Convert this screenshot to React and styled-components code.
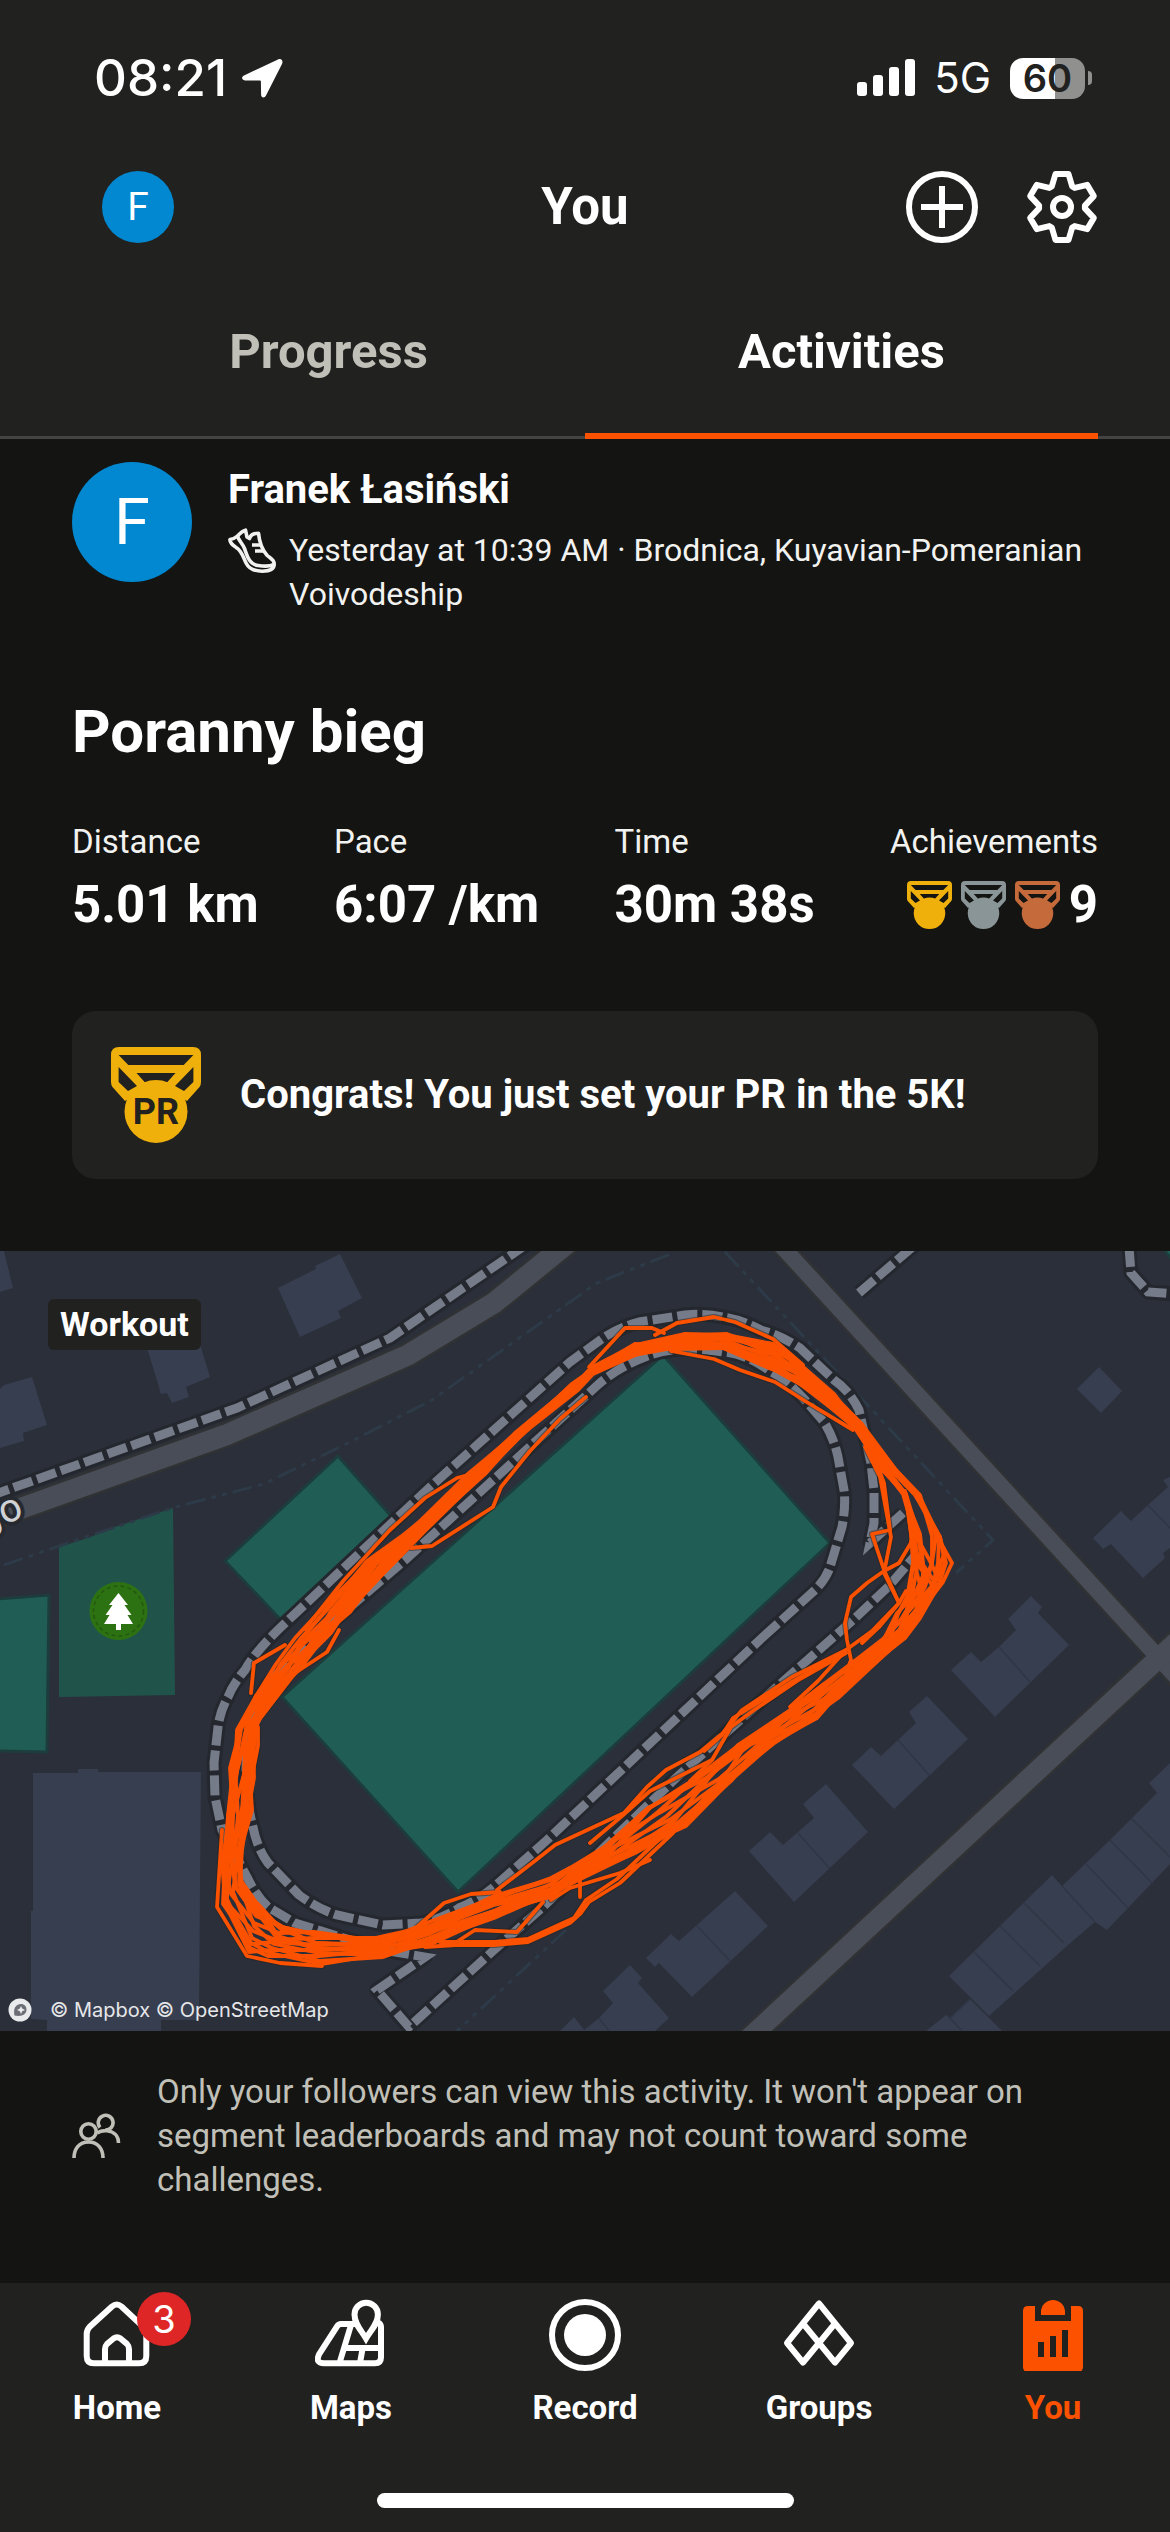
import React from 'react';
import styled, { createGlobalStyle } from 'styled-components';

const color = {
  surface: '#21211f',
  page: '#141412',
  line: '#434341',
  text: '#ffffff',
  soft: '#f2f2f0',
  muted: '#c1c0b8',
  accent: '#fc5200',
  avatar: '#0288d1',
  badge: '#de2626',
};

const GlobalStyle = createGlobalStyle`
  *, *::before, *::after { box-sizing: border-box; }
  body { margin: 0; background: ${color.page}; color: ${color.text}; font-family: Roboto, "Liberation Sans", sans-serif; }
  h1, h2, p, dl, dt, dd { margin: 0; font-weight: inherit; }
  svg { display: block; flex: none; }
  button { padding: 0; border: 0; background: none; color: inherit; font: inherit; cursor: pointer; }
  a { color: inherit; text-decoration: none; }
`;

const Screen = styled.div`
  display: flex;
  flex-direction: column;
  min-height: 100vh;
`;

const Top = styled.header`
  background: ${color.surface};
`;

const StatusBar = styled.div`
  display: flex;
  align-items: center;
  justify-content: space-between;
  height: 156px;
  padding: 0 78px 0 94px;
  font-family: Inter, "Liberation Sans", sans-serif;
`;

const StatusGroup = styled.div`
  display: flex;
  align-items: center;
  gap: ${(p) => p.$gap}px;
`;

const Clock = styled.span`
  font-size: 51px;
  font-weight: 500;
  line-height: 60px;
`;

const Network = styled.span`
  font-size: 42px;
  line-height: 50px;
`;

const Battery = styled.div`
  display: flex;
  align-items: center;
  gap: 3px;
`;

const BatteryBody = styled.span`
  width: 75px;
  border-radius: 13px;
  background: linear-gradient(90deg, #fff 60%, #90908f 60%);
  color: ${color.surface};
  font-size: 38px;
  font-weight: 600;
  line-height: 41px;
  text-align: center;
`;

const BatteryTip = styled.span`
  width: 4px;
  height: 14px;
  border-radius: 0 4px 4px 0;
  background: #90908f;
`;

const TitleBar = styled.div`
  display: grid;
  grid-template-columns: 1fr auto 1fr;
  align-items: center;
  height: 102px;
  padding: 0 72px 0 102px;
`;

const Title = styled.h1`
  margin-right: 30px;
  font-size: 51px;
  font-weight: 700;
  line-height: 60px;
`;

const Actions = styled.div`
  display: flex;
  justify-content: flex-end;
  gap: 48px;
`;

const Avatar = styled.span`
  display: flex;
  flex: none;
  align-items: center;
  justify-content: center;
  width: ${(p) => p.$size}px;
  height: ${(p) => p.$size}px;
  border-radius: 50%;
  background: ${color.avatar};
  color: #fff;
  font-size: ${(p) => p.$font}px;
  line-height: 1;
`;

const Tabs = styled.div`
  display: flex;
  height: 181px;
  padding: 0 72px;
  border-bottom: 3px solid ${color.line};
`;

const Tab = styled.button`
  flex: 1;
  margin-bottom: -3px;
  padding-top: 12px;
  border-bottom: 6px solid ${(p) => (p.$active ? color.accent : 'transparent')};
  color: ${(p) => (p.$active ? color.text : color.muted)};
  font-size: 49px;
  font-weight: 700;
`;

const Feed = styled.main`
  flex: 1;
`;

const Summary = styled.div`
  padding: 23px 72px 72px;
`;

const Athlete = styled.div`
  display: flex;
  gap: 36px;
`;

const AthleteText = styled.div`
  display: flex;
  flex-direction: column;
  gap: 14px;
  min-width: 0;
  padding-top: 4px;
`;

const Name = styled.a`
  font-size: 40px;
  font-weight: 700;
  line-height: 48px;
`;

const Meta = styled.div`
  display: flex;
  gap: 13px;
  color: ${color.soft};
  font-size: 32px;
  line-height: 44px;
`;

const ActivityTitle = styled.h2`
  margin-top: 80px;
  font-size: 60px;
  font-weight: 700;
  line-height: 72px;
`;

const Stats = styled.dl`
  display: flex;
  justify-content: space-between;
  margin-top: 52px;
`;

const Stat = styled.div`
  text-align: ${(p) => (p.$end ? 'right' : 'left')};
`;

const StatLabel = styled.dt`
  color: ${color.soft};
  font-size: 33px;
  line-height: 44px;
`;

const StatValue = styled.dd`
  display: flex;
  align-items: center;
  justify-content: ${(p) => (p.$end ? 'flex-end' : 'flex-start')};
  gap: 9px;
  margin-top: 11px;
  font-size: 51px;
  font-weight: 700;
  line-height: 60px;
`;

const Congrats = styled.div`
  display: flex;
  align-items: center;
  gap: 39px;
  margin-top: 76px;
  padding: 36px 39px;
  border-radius: 24px;
  background: ${color.surface};
  font-size: 40px;
  font-weight: 700;
  line-height: 48px;
`;

const MapFrame = styled.div`
  position: relative;
  overflow: hidden;
  background: #2b2f3a;
`;

const MapDrawing = styled.svg`
  width: 100%;
  height: auto;
`;

const Chip = styled.span`
  position: absolute;
  top: 48px;
  left: 48px;
  padding: 0 12px;
  border-radius: 6px;
  background: ${color.surface};
  font-size: 34px;
  font-weight: 700;
  line-height: 51px;
`;

const Attribution = styled.div`
  position: absolute;
  bottom: 8px;
  left: 8px;
  display: flex;
  align-items: center;
  gap: 18px;
  color: #e6e7e9;
  font-family: Inter, "Liberation Sans", sans-serif;
  font-size: 20px;
  line-height: 26px;
`;

const Privacy = styled.div`
  display: flex;
  align-items: center;
  gap: 36px;
  padding: 39px 72px;
  color: ${color.muted};
  font-size: 33px;
  line-height: 44px;
`;

const Bottom = styled.footer`
  padding-bottom: 24px;
  background: ${color.surface};
`;

const Nav = styled.nav`
  display: flex;
  padding: 16px 0 65px;
`;

const NavItem = styled.a`
  display: flex;
  flex: 1;
  flex-direction: column;
  align-items: center;
  gap: 17px;
  color: ${(p) => (p.$active ? color.accent : color.text)};
  font-size: 33px;
  font-weight: 700;
  line-height: 40px;
`;

const NavIcon = styled.span`
  position: relative;
`;

const Badge = styled.span`
  position: absolute;
  top: -7px;
  right: -38px;
  width: 54px;
  border-radius: 27px;
  background: ${color.badge};
  color: #fff;
  font-family: Inter, "Liberation Sans", sans-serif;
  font-size: 38px;
  font-weight: 400;
  line-height: 54px;
  text-align: center;
`;

const HomeIndicator = styled.div`
  width: 417px;
  height: 15px;
  margin: 0 auto;
  border-radius: 8px;
  background: #fff;
`;

const LocationIcon = () => (
  <svg width="42" height="40" viewBox="0 0 42 40" fill="#fff" aria-hidden="true">
    <path d="M37 1.500 3 17.500C0 19 .7 22.300 4 22.400l15 .2c.6 0 .9.3.9.9l.2 13c0 3.400 3.400 4 4.900 1L41 6c1.500-3.200-.8-6-4-4.500z" />
  </svg>
);

const SignalIcon = () => (
  <svg width="58" height="38" viewBox="0 0 58 38" fill="#fff" aria-hidden="true">
    <rect x="0" y="23" width="10" height="14" rx="3" />
    <rect x="16" y="16" width="10" height="21" rx="3" />
    <rect x="32" y="8" width="10" height="29" rx="3" />
    <rect x="48" y="0" width="10" height="37" rx="3" />
  </svg>
);

const PlusIcon = () => (
  <svg width="72" height="72" viewBox="0 0 72 72" fill="none" stroke="currentColor" strokeWidth="6" aria-hidden="true">
    <circle cx="36" cy="36" r="33" />
    <path d="M36 15v42M15 36h42" />
  </svg>
);

const gearPoints = [0, 60, 120, 180, 240, 300]
  .flatMap((deg) => {
    const a = (deg * Math.PI) / 180;
    return [[-10.2, -20.5], [-6.5, -33], [6.5, -33], [10.2, -20.5]].map(([x, y]) =>
      [36 + x * Math.cos(a) - y * Math.sin(a), 36 + x * Math.sin(a) + y * Math.cos(a)].map((n) => n.toFixed(1)).join(',')
    );
  })
  .join(' ');

const GearIcon = () => (
  <svg width="72" height="72" viewBox="0 0 72 72" fill="none" stroke="currentColor" strokeWidth="6" strokeLinejoin="round" aria-hidden="true">
    <polygon points={gearPoints} />
    <circle cx="36" cy="36" r="9" />
  </svg>
);

const ShoeIcon = () => (
  <svg width="48" height="46" viewBox="0 0 48 46" fill="none" stroke="currentColor" strokeWidth="3.600" strokeLinejoin="round" aria-hidden="true">
    <path d="M2 11.500Q6 11 9.500 8 14 3 17.500 2.200L19 9l2.500 1.500Q23 5.200 30.500 5.200c1 10 4 17 8.500 22 3 3 7.200 4 7.200 8.800 0 5-5 7.200-12 7.200-8 0-13-2-16-8-3-6-4-11-9-15C5 17 1.600 15 2 11.500z" />
    <path d="M9.500 8.500c2 5 5 7 7 12 2.500 6.500 4 15.500 13.500 17 5 .8 12 1 15.500-1M24 17h8M27 23h8" />
  </svg>
);

const PeopleIcon = () => (
  <svg width="49" height="46" viewBox="0 0 49 46" fill="none" stroke="currentColor" strokeWidth="3.600" aria-hidden="true">
    <circle cx="16.500" cy="18.500" r="7.700" />
    <path d="M2 45c0-9 5-16 14.500-16S31 36 31 45" />
    <path d="M28 14.500a7.400 7.400 0 1 1 5 2.600M25 20c3-2 6-2.700 10-2.300C42 18.500 46.500 23 46.500 30" />
  </svg>
);

const Medal = ({ size, fill, label }) => (
  <svg width={(size * 15) / 16} height={size} viewBox="0 0 90 96" fill={fill} role="img" aria-label={label || 'Medal'}>
    <path fillRule="evenodd" d="M8 0H82Q90 0 90 8V35Q90 38 88.500 40L76 54 62 46H28L14 54 1.500 40Q0 38 0 35V8Q0 0 8 0zM7.600 8 17.300 18H72.700L82.400 8zM25.500 26 34.500 36H55.500L64.500 26zM7.600 20V35L17 44 26 39zM82.400 20V35L73 44 64 39z" />
    <circle cx="45" cy="64.500" r="31.500" />
    {label && (
      <text x="45" y="77" textAnchor="middle" fill={color.surface} fontFamily="Roboto, sans-serif" fontWeight="700" fontSize="36">
        {label}
      </text>
    )}
  </svg>
);

const HomeIcon = () => (
  <svg width="72" height="72" viewBox="0 0 72 72" fill="none" stroke="currentColor" strokeWidth="6" aria-hidden="true">
    <path d="M31 7.500 8.500 28Q5.700 31 5.700 35V57q0 7.300 7.300 7.300H58q7.300 0 7.300-7.300V35q0-4-2.800-7L40.500 7.500q-4.800-4-9.500 0z" />
    <path d="M24 63V50q0-3 2-5l6.500-5.500q3.500-2.500 7 0L46 45q2 2 2 5v13" />
  </svg>
);

const MapsIcon = () => (
  <svg width="72" height="72" viewBox="0 0 72 72" fill="none" stroke="currentColor" strokeWidth="6" aria-hidden="true">
    <path d="M40 25H26q-2.500 0-3.800 2.200L4 55.500q-4 8.700 5 8.700H60q6 0 6-6V28q0-3-3-4.500M36 26 24.500 64M29 49H66M47.500 50 45 64" />
    <path d="M51 39.500C46 31 39.500 25 39.500 15.500a11.700 11.700 0 0 1 23.400 0C62.900 25 56 31 51 39.500z" />
  </svg>
);

const RecordIcon = () => (
  <svg width="72" height="72" viewBox="0 0 72 72" aria-hidden="true">
    <circle cx="36" cy="36" r="33" fill="none" stroke="currentColor" strokeWidth="6" />
    <circle cx="36" cy="36" r="21" fill="currentColor" />
  </svg>
);

const GroupsIcon = () => (
  <svg width="72" height="72" viewBox="0 0 72 72" fill="none" stroke="currentColor" strokeWidth="6" strokeLinejoin="round" aria-hidden="true">
    <path d="M36 4.500 4 44 20 63.500 52 24.500zM36 4.500 68 44 52 63.500 20 24.500" />
  </svg>
);

const YouIcon = () => (
  <svg width="72" height="72" viewBox="0 0 72 72" fill="currentColor" aria-hidden="true">
    <path fillRule="evenodd" d="M18 7h-7q-5 0-5 5v56q0 5 5 5h50q5 0 5-5V12q0-5-5-5h-7v15H18zM21 43h6v15h-6zM33 37h6v21h-6zM45 31h6v27h-6z" />
    <path d="M24 16v-3a12 12 0 0 1 24 0v3z" />
  </svg>
);

const buildings = [
  '0,0 4,0 13,37 0,41',
  '278,37 316,18 315,15 340,3 362,47 338,60 341,67 300,86',
  '145,90 199,90 210,126 186,136 189,146 172,152 167,142 161,143',
  '0,138 4,134 32,126 47,174 23,182 24,190 0,197',
  '33,522 78,522 78,518 98,518 98,521 201,521 200,636 199,769 161,769 161,780 47,780 47,769 31,768 31,660 33,660',
  '1099,116 1122,140 1101,162 1077,138',
  '1170,226 1163,229 1168,236 1148,254 1131,270 1121,260 1093,287 1103,298 1111,293 1143,327 1165,307 1163,302 1170,297',
  '1031,345 1042,356 1038,362 1069,394 995,466 951,419 971,401 981,411 999,396 1016,379 1008,368',
  '927,445 968,488 894,558 852,514 871,496 881,505 916,472 909,461',
  '826,533 868,581 794,651 749,600 770,581 783,594 814,567 803,553',
  '735,640 768,675 692,746 659,712 655,716 646,707 671,683 679,690',
  '630,714 642,727 638,732 669,767 655,780 583,780 599,767 613,752 603,740',
  '574,766 585,780 560,780',
  '1170,512 1149,532 1157,542 1110,589 1062,635 1052,624 949,725 989,765 1067,695 1095,671 1107,679 1170,613',
  '970,748 1002,780 926,780 946,764 950,767',
];

const dividers =
  'M1148 254l22 23M999 396l31 35M898 489l32 36M798 582l32 36M697 675l33 35M599 767l10 13M974 701l39 39M1000 675l40 40M1024 652l40 40M1085 612l43 45M1110 589l43 44M1131 567l39 39M1062 635l33 36M970 748l-20 19 12 13';

const footpaths = [
  'M-10 245 237 157 390 87 530-9',
  'M859 42 916-7',
  'M1129-4 1131 22 1148 41 1175 43',
  'M903 262 870 292 874 272V240L871 212 859 159Q850 140 834 129L800 97Q780 84 761 79 740 68 723 66 705 62 685 64L639 71Q620 76 603 87L570 111 429 237 281 376Q254 402 245 419 233 433 228 446 220 460 218 476L214 512 215 546 222 579 247 626Q256 645 268 656L295 672 383 699 425 706 377 739 409 776 494 699 543 656 620 581 677 526 779 434 853 369 888 336 914 306',
  'M763 386 815 339Q826 328 830 316L842 276Q846 255 844 239L838 206Q834 187 824 171L805 149Q788 130 770 120 745 102 723 101 680 94 650 104 620 115 600 132L405 309 323 379 275 425Q246 455 246 520 246 550 253 576 257 597 268 612L299 644Q318 658 337 664L383 674 421 672Q442 668 459 657 480 648 494 636L547 589z',
];

const boundaries = [
  'M4 314 59 295 172 257 264 233 350 191 432 149 597 32 673 2',
  'M725 1 993 289 956 322',
  'M566 679 457 780',
];

/* Each entry is [outerX, outerY, innerX, innerY]: the two sides of the band that the laps stay in. */
const band = [
  [685, 82, 671, 100], [727, 82, 723, 98], [773, 92, 769, 119], [803, 114, 800, 134], [834, 141, 830, 157],
  [861, 172, 854, 178], [897, 218, 882, 219], [920, 244, 903, 243], [941, 286, 911, 282], [952, 312, 907, 312],
  [952, 329, 903, 342], [925, 368, 895, 362], [906, 387, 882, 388], [838, 447, 822, 432], [817, 467, 784, 459],
  [775, 493, 735, 494], [738, 529, 696, 526], [689, 576, 647, 556], [636, 602, 593, 601], [570, 634, 570, 614],
  [551, 647, 551, 624], [494, 667, 494, 644], [429, 694, 429, 671], [383, 706, 375, 687], [321, 713, 314, 681],
  [268, 706, 283, 675], [249, 702, 258, 652], [221, 655, 244, 628], [222, 609, 243, 599], [226, 566, 252, 559],
  [230, 517, 254, 527], [237, 479, 256, 476], [251, 444, 272, 450], [270, 411, 300, 419], [287, 388, 331, 382],
  [320, 360, 350, 361], [366, 310, 392, 315], [419, 270, 425, 283], [467, 223, 499, 222], [515, 182, 534, 188],
  [572, 133, 584, 145], [591, 117, 596, 129], [635, 91, 635, 109],
];

const laps = Array.from({ length: 14 }, (_, lap) =>
  band
    .map(([ox, oy, ix, iy], i) => {
      const t = 0.5 + 0.42 * Math.sin(i * (0.31 + (lap % 5) * 0.09) + lap * 2.4) + 0.08 * Math.sin(i * 2.1 + lap);
      return `${Math.round(ox + (ix - ox) * t)},${Math.round(oy + (iy - oy) * t)}`;
    })
    .join(' ')
);

const strays = [
  '589,116 625,77 652,77 664,82',
  '655,84 677,72 714,66 735,71 773,88 803,114',
  '671,100 714,108 740,119 775,131 805,150 853,179',
  '500,205 475,222 457,227 425,247 390,279 344,329 305,378',
  '586,146 560,168 530,200 501,236 493,256 432,295 411,297',
  '872,200 884,232 890,279 872,283 884,319 899,352 906,340',
  '865,196 880,226 891,286 884,322 899,352 880,375 862,392',
  '905,240 912,290 899,312 884,320 867,332 851,346 845,372 847,389 851,409 846,422',
  '899,352 872,380 846,399 792,426 742,459 723,482 700,501 666,519 647,536 624,562 570,587 555,594 536,609 497,639',
  '846,402 800,428 754,459 731,476 712,509 690,530',
  '840,404 790,432 733,467 722,484 704,500',
  '846,399 818,430 790,456',
  '712,509 650,540 622,565 590,592',
  '673,582 620,632 589,651 581,662 570,672 528,691 494,694 455,694 425,696',
  '668,580 617,628 586,649 574,667 528,688 494,691 440,691',
  '650,609 620,622 570,637 551,649',
  '417,676 444,652 471,643 500,641',
  '543,651 517,681 475,679 455,692',
  '580,628 580,646',
  '285,394 254,412 251,442',
  '339,379 327,401 295,422 262,465',
  '222,579 217,656 247,705 280,712 322,715',
  '945,300 930,342 905,372',
  '911,290 925,320 912,350 899,372',
  '258,476 258,495 252,525',
];

const RouteMap = () => (
  <MapDrawing viewBox="0 0 1170 780" role="img" aria-label="Map of the running route">
    <rect width="1170" height="780" fill="#2b2f3a" />
    <g fill="#373e4f">
      {buildings.map((points) => (
        <polygon key={points} points={points} />
      ))}
    </g>
    <path d={dividers} fill="none" stroke="#2f3645" strokeWidth="1.500" />
    <polygon points="59,296 88,287 115,276 173,257 175,444 59,446" fill="#20544b" />
    <g fill="#205d55" stroke="#1d3d3c" strokeWidth="3">
      <polygon points="663,104 830,292 458,641 282,446" />
      <polygon points="338,205 391,265 281,369 225,310" />
      <polygon points="-4,348 49,344 47,501 -4,500" />
      <polygon points="1163,-2 1174,-2 1174,11" />
    </g>
    <g fill="none" stroke="#2d3a47" strokeWidth="3" strokeDasharray="20 6 5 6 5 6">
      {boundaries.map((d) => (
        <path key={d} d={d} />
      ))}
    </g>
    <g fill="none" stroke="#303234">
      <path d="M-20 272 226 184 408 104 494 52 580-18" strokeWidth="26" />
      <path d="M777-10 1190 441" strokeWidth="21" />
      <path d="M745 791 1190 378" strokeWidth="25" />
    </g>
    <g fill="none" stroke="#494d57">
      <path d="M-20 272 226 184 408 104 494 52 580-18" strokeWidth="21" />
      <path d="M777-10 1190 441" strokeWidth="16" />
      <path d="M745 791 1190 378" strokeWidth="20" />
    </g>
    <g fill="none" stroke="#24282e" strokeWidth="15" strokeLinejoin="round">
      {footpaths.map((d) => (
        <path key={d} d={d} />
      ))}
    </g>
    <g fill="none" stroke="#757b88" strokeWidth="9" strokeDasharray="20 5">
      {footpaths.map((d) => (
        <path key={d} d={d} />
      ))}
    </g>
    <text x="25" y="266" textAnchor="end" transform="rotate(-20 25 266)" fill="#cfd1d5" stroke="#26292f" strokeWidth="8" paintOrder="stroke" fontFamily="Roboto, sans-serif" fontSize="40">
      go
    </text>
    <circle cx="118.500" cy="360" r="29" fill="#2d7212" />
    <circle cx="118.500" cy="360" r="25" fill="none" stroke="#24580f" strokeWidth="1.500" strokeDasharray="4 3" />
    <path d="M118.500 342 109 354h3.500L105.500 364h4L104 373h12v6h5v-6h12l-5.500-9h4L124.500 354h3.500z" fill="#fff" />
    <g fill="none" strokeLinejoin="round" strokeLinecap="round">
      <g stroke="#26231f" strokeOpacity="0.500" strokeWidth="6">
        {strays.map((points) => (
          <polyline key={points} points={points} />
        ))}
      </g>
      <g stroke={color.accent} strokeWidth="3.800">
        {laps.map((points) => (
          <polygon key={points} points={points} />
        ))}
        {strays.map((points) => (
          <polyline key={points} points={points} />
        ))}
      </g>
    </g>
  </MapDrawing>
);

const MapboxMark = () => (
  <svg width="24" height="24" viewBox="0 0 24 24" aria-hidden="true">
    <circle cx="12" cy="12" r="11.500" fill="#e9eaec" />
    <path d="M6.500 17.500C5 11 7.500 6 13 6c3.500 0 5.500 2.500 5.500 5.500 0 5-5 7.500-12 6z" fill="#6c6e76" />
    <path d="M13 8l1.200 2.600L17 12l-2.800 1.200L13 16l-1.200-2.800L9 12l2.800-1.400z" fill="#e9eaec" />
  </svg>
);

const stats = [
  { label: 'Distance', value: '5.01 km' },
  { label: 'Pace', value: '6:07 /km' },
  { label: 'Time', value: '30m 38s' },
];

const medals = ['#f0b00c', '#8a9597', '#c56a3a'];

const navItems = [
  { label: 'Home', Icon: HomeIcon, badge: '3' },
  { label: 'Maps', Icon: MapsIcon },
  { label: 'Record', Icon: RecordIcon },
  { label: 'Groups', Icon: GroupsIcon },
  { label: 'You', Icon: YouIcon, active: true },
];

export default function App() {
  return (
    <Screen>
      <GlobalStyle />
      <Top>
        <StatusBar>
          <StatusGroup $gap={14}>
            <Clock>08:21</Clock>
            <LocationIcon />
          </StatusGroup>
          <StatusGroup $gap={19}>
            <SignalIcon />
            <Network>5G</Network>
            <Battery>
              <BatteryBody>60</BatteryBody>
              <BatteryTip />
            </Battery>
          </StatusGroup>
        </StatusBar>
        <TitleBar>
          <a href="#profile" aria-label="Profile">
            <Avatar $size={72} $font={39}>F</Avatar>
          </a>
          <Title>You</Title>
          <Actions>
            <button type="button" aria-label="Add"><PlusIcon /></button>
            <button type="button" aria-label="Settings"><GearIcon /></button>
          </Actions>
        </TitleBar>
        <Tabs role="tablist">
          <Tab type="button" role="tab" aria-selected="false">Progress</Tab>
          <Tab type="button" role="tab" aria-selected="true" $active>Activities</Tab>
        </Tabs>
      </Top>
      <Feed>
        <article>
          <Summary>
            <Athlete>
              <Avatar $size={120} $font={65}>F</Avatar>
              <AthleteText>
                <Name href="#athlete">Franek Łasiński</Name>
                <Meta>
                  <ShoeIcon />
                  <p>Yesterday at 10:39 AM · Brodnica, Kuyavian-Pomeranian Voivodeship</p>
                </Meta>
              </AthleteText>
            </Athlete>
            <ActivityTitle>Poranny bieg</ActivityTitle>
            <Stats>
              {stats.map((s) => (
                <Stat key={s.label}>
                  <StatLabel>{s.label}</StatLabel>
                  <StatValue>{s.value}</StatValue>
                </Stat>
              ))}
              <Stat $end>
                <StatLabel>Achievements</StatLabel>
                <StatValue $end>
                  {medals.map((fill) => (
                    <Medal key={fill} size={48} fill={fill} />
                  ))}
                  9
                </StatValue>
              </Stat>
            </Stats>
            <Congrats>
              <Medal size={96} fill="#f0b00c" label="PR" />
              <p>Congrats! You just set your PR in the 5K!</p>
            </Congrats>
          </Summary>
          <MapFrame>
            <RouteMap />
            <Chip>Workout</Chip>
            <Attribution>
              <MapboxMark />
              © Mapbox © OpenStreetMap
            </Attribution>
          </MapFrame>
          <Privacy>
            <PeopleIcon />
            <p>Only your followers can view this activity. It won't appear on segment leaderboards and may not count toward some challenges.</p>
          </Privacy>
        </article>
      </Feed>
      <Bottom>
        <Nav aria-label="Main">
          {navItems.map(({ label, Icon, badge, active }) => (
            <NavItem key={label} href={`#${label.toLowerCase()}`} $active={active} aria-current={active ? 'page' : undefined}>
              <NavIcon>
                <Icon />
                {badge && <Badge>{badge}</Badge>}
              </NavIcon>
              {label}
            </NavItem>
          ))}
        </Nav>
        <HomeIndicator />
      </Bottom>
    </Screen>
  );
}
